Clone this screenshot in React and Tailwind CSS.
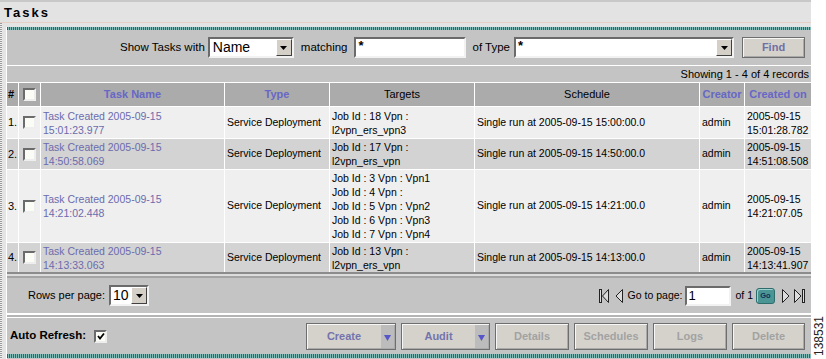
import React from "react";

const teal =
  "bg-[repeating-linear-gradient(90deg,#1a706d_0px,#1a706d_1px,#82bdb9_1px,#82bdb9_2px)]";

function Arrow() {
  return (
    <div className="w-[16px] h-full bg-[#d4d0c8] border border-t-white border-l-white border-b-[#404040] border-r-[#404040] flex items-center justify-center">
      <svg width="7" height="4" viewBox="0 0 7 4">
        <polygon points="0,0 7,0 3.5,4" fill="#000" />
      </svg>
    </div>
  );
}

function Sunken({ className, children }) {
  return (
    <div
      className={
        "flex bg-white border-2 border-t-[#6b6b6b] border-l-[#6b6b6b] border-b-[#f2f2f2] border-r-[#f2f2f2] " +
        className
      }
    >
      {children}
    </div>
  );
}

function Check({ checked }) {
  return (
    <div className="w-[13px] h-[13px] bg-[#fcfcf6] border-2 border-t-[#6b6b6b] border-l-[#6b6b6b] border-b-[#eeeeee] border-r-[#eeeeee] flex items-center justify-center">
      {checked && (
        <svg width="8" height="8" viewBox="0 0 8 8">
          <path d="M1 4 L3 6.5 L7 1.5" stroke="#000" strokeWidth="1.8" fill="none" />
        </svg>
      )}
    </div>
  );
}

function Btn({ label, w, active, dropdown }) {
  return (
    <div
      className={
        "h-[27px] flex bg-[#d5d2cc] border border-[#6e6e6e] shadow-[inset_1px_1px_0_#f6f6f6,inset_-1px_-1px_0_#a9a9a9] " +
        w
      }
    >
      <div
        className={
          "flex-1 flex items-center justify-center text-[11px] font-bold " +
          (active ? "text-[#7474ac]" : "text-[#a2a2a2]")
        }
      >
        {label}
      </div>
      {dropdown && (
        <div className="w-[13px] bg-[#bcbcbc] flex items-end justify-center pb-[7px] mr-[1px] my-[1px]">
          <svg width="7" height="6" viewBox="0 0 7 6">
            <polygon points="0,0 7,0 3.5,6" fill="#5656c8" />
          </svg>
        </div>
      )}
    </div>
  );
}

const cols =
  "grid grid-cols-[11px_21px_183px_104px_144px_224px_44px_66px] gap-x-px";

const rows = [
  {
    n: "1.",
    name: ["Task Created 2005-09-15", "15:01:23.977"],
    targets: ["Job Id : 18 Vpn :", "l2vpn_ers_vpn3"],
    sched: "Single run at 2005-09-15 15:00:00.0",
    created: ["2005-09-15", "15:01:28.782"],
    h: "h-[31px]",
    bg: "bg-[#efefef]",
  },
  {
    n: "2.",
    name: ["Task Created 2005-09-15", "14:50:58.069"],
    targets: ["Job Id : 17 Vpn :", "l2vpn_ers_vpn"],
    sched: "Single run at 2005-09-15 14:50:00.0",
    created: ["2005-09-15", "14:51:08.508"],
    h: "h-[30px]",
    bg: "bg-[#d3d3d3]",
  },
  {
    n: "3.",
    name: ["Task Created 2005-09-15", "14:21:02.448"],
    targets: [
      "Job Id : 3 Vpn : Vpn1",
      "Job Id : 4 Vpn :",
      "Job Id : 5 Vpn : Vpn2",
      "Job Id : 6 Vpn : Vpn3",
      "Job Id : 7 Vpn : Vpn4",
    ],
    sched: "Single run at 2005-09-15 14:21:00.0",
    created: ["2005-09-15", "14:21:07.05"],
    h: "h-[72px]",
    bg: "bg-[#efefef]",
  },
  {
    n: "4.",
    name: ["Task Created 2005-09-15", "14:13:33.063"],
    targets: ["Job Id : 13 Vpn :", "l2vpn_ers_vpn"],
    sched: "Single run at 2005-09-15 14:13:00.0",
    created: ["2005-09-15", "14:13:41.907"],
    h: "h-[29px]",
    bg: "bg-[#d3d3d3]",
  },
];

function Lines({ lines }) {
  return (
    <div className="flex flex-col leading-[14px]">
      {lines.map((l, i) => (
        <span key={i} className="whitespace-nowrap">
          {l}
        </span>
      ))}
    </div>
  );
}

export default function App() {
  return (
    <div className="w-[826px] h-[359px] bg-white overflow-hidden flex font-['Liberation_Sans',Arial,sans-serif] text-black">
      <div className="w-[811px] flex flex-col">
        {/* Title bar */}
        <div className="h-[23px] shrink-0 bg-[#e3e3e3] border-t-2 border-t-[#c8c8c8] border-b border-b-[#e8cfc6] pl-[4px] flex items-center">
          <span className="text-[13px] font-bold tracking-[2px] leading-none">Tasks</span>
        </div>
        <div className="flex flex-1 min-h-0">
          {/* left dotted strip */}
          <div className="w-[2px] bg-[repeating-linear-gradient(180deg,#9a9a9a_0px,#9a9a9a_1px,#f0f0f0_1px,#f0f0f0_2px)]" />
          <div className="w-[4px] bg-[#e4e4e4]" />
          <div className="flex-1 flex flex-col bg-[#e4e4e4] pt-[4px]">
            <div className="flex-1 flex flex-col border-l border-l-white bg-[#c4c4c4]">
              <div className={"h-[3px] shrink-0 " + teal} />
              {/* Filter row */}
              <div className="h-[35px] shrink-0 flex items-center justify-end pr-[6px] text-[11.5px]">
                <span className="mr-[3px]">Show Tasks with</span>
                <Sunken className="w-[86px] h-[21px]">
                  <span className="flex-1 text-[14px] leading-[17px] pl-[3px]">Name</span>
                  <Arrow />
                </Sunken>
                <span className="ml-[7px] mr-[7px]">matching</span>
                <Sunken className="w-[112px] h-[21px]">
                  <span className="text-[13px] leading-[13px] pl-[2px] font-bold">*</span>
                </Sunken>
                <span className="ml-[6px] mr-[4px]">of Type</span>
                <Sunken className="w-[220px] h-[21px]">
                  <span className="flex-1 text-[13px] leading-[13px] pl-[2px] font-bold">*</span>
                  <Arrow />
                </Sunken>
                <div className="ml-[8px] w-[63px] h-[21px] bg-[#d5d2cc] border border-[#6e6e6e] shadow-[inset_1px_1px_0_#f6f6f6,inset_-1px_-1px_0_#a9a9a9] flex items-center justify-center text-[11px] font-bold text-[#7070a4]">
                  Find
                </div>
              </div>
              <div className="h-px bg-white shrink-0" />
              {/* Showing row */}
              <div className="h-[16px] shrink-0 flex items-center justify-end pr-[2px] text-[11px] leading-none">
                Showing 1 - 4 of 4 records
              </div>
              <div className="h-px bg-white shrink-0" />
              {/* Table */}
              <div className="flex flex-col gap-y-px bg-white shrink-0">
                <div className={cols + " h-[23px] bg-white text-[11px]"}>
                  <div className="bg-[#ababab] flex items-center pl-[1px] font-bold">#</div>
                  <div className="bg-[#ababab] flex items-center justify-center">
                    <Check />
                  </div>
                  <div className="bg-[#ababab] flex items-center justify-center font-bold text-[#6767c6]">Task Name</div>
                  <div className="bg-[#ababab] flex items-center justify-center font-bold text-[#6767c6]">Type</div>
                  <div className="bg-[#ababab] flex items-center justify-center">Targets</div>
                  <div className="bg-[#ababab] flex items-center justify-center">Schedule</div>
                  <div className="bg-[#ababab] flex items-center justify-center font-bold text-[#6767c6] whitespace-nowrap">Creator</div>
                  <div className="bg-[#ababab] flex items-center justify-center font-bold text-[#6767c6] whitespace-nowrap">Created on</div>
                </div>
                {rows.map((r) => (
                  <div key={r.n} className={cols + " bg-white text-[10.5px] " + r.h}>
                    <div className={r.bg + " flex items-center pl-[1px] text-[11px]"}>{r.n}</div>
                    <div className={r.bg + " flex items-center justify-center"}>
                      <Check />
                    </div>
                    <div className={r.bg + " flex items-center pl-[2px] text-[#6b6bae]"}>
                      <Lines lines={r.name} />
                    </div>
                    <div className={r.bg + " flex items-center pl-[2px] whitespace-nowrap"}>Service Deployment</div>
                    <div className={r.bg + " flex items-center pl-[2px]"}>
                      <Lines lines={r.targets} />
                    </div>
                    <div className={r.bg + " flex items-center pl-[2px] whitespace-nowrap"}>{r.sched}</div>
                    <div className={r.bg + " flex items-center pl-[2px]"}>admin</div>
                    <div className={r.bg + " flex items-center pl-[2px]"}>
                      <Lines lines={r.created} />
                    </div>
                  </div>
                ))}
              </div>
              {/* separator */}
              <div className="h-[2px] bg-[#8c8c8c] shrink-0" />
              <div className="h-[2px] bg-[#dcdcdc] shrink-0" />
              <div className="h-[2px] bg-[#a4a4a4] shrink-0" />
              {/* Pagination */}
              <div className="h-[35px] shrink-0 flex items-center pl-[21px] pr-[5px] text-[11px]">
                <span className="mr-[4px]">Rows per page:</span>
                <Sunken className="w-[40px] h-[21px]">
                  <span className="flex-1 text-[14px] leading-[17px] pl-[2px]">10</span>
                  <Arrow />
                </Sunken>
                <div className="flex-1" />
                <svg width="10" height="16" viewBox="0 0 10 16" className="mr-[6px]">
                  <rect x="0.5" y="1.5" width="2" height="13" fill="#dcdcdc" stroke="#222" />
                  <polygon points="9.5,1.5 3.5,8 9.5,14.5" fill="#dcdcdc" stroke="#222" />
                </svg>
                <svg width="8" height="16" viewBox="0 0 8 16" className="mr-[5px]">
                  <polygon points="7.5,1.5 1,8 7.5,14.5" fill="#dcdcdc" stroke="#222" />
                </svg>
                <span className="text-[10.5px] mr-[3px]">Go to page:</span>
                <Sunken className="w-[46px] h-[20px]">
                  <span className="text-[13px] leading-[16px] pl-[1px]">1</span>
                </Sunken>
                <span className="text-[10.5px] ml-[4px] mr-[3px]">of 1</span>
                <div className="w-[19px] h-[16px] rounded-[3px] bg-[#4c9595] border border-[#2f6d6d] shadow-[inset_1px_1px_0_#9fd0cf] flex items-center justify-center text-[7.5px] font-bold text-[#10305a] leading-none">
                  Go
                </div>
                <svg width="8" height="16" viewBox="0 0 8 16" className="ml-[7px] mr-[4px]">
                  <polygon points="0.5,1.5 7,8 0.5,14.5" fill="#dcdcdc" stroke="#222" />
                </svg>
                <svg width="12" height="16" viewBox="0 0 12 16">
                  <polygon points="0.5,1.5 7,8 0.5,14.5" fill="#dcdcdc" stroke="#222" />
                  <rect x="8.5" y="1.5" width="2" height="13" fill="#dcdcdc" stroke="#222" />
                </svg>
              </div>
              <div className="h-[2px] bg-white shrink-0" />
              <div className="h-[2px] bg-[#b4b4b4] shrink-0" />
              <div className="h-px bg-white shrink-0" />
              {/* Toolbar */}
              <div className="h-[36px] shrink-0 flex items-center pl-[3px] pr-[6px]">
                <span className="text-[11.5px] font-bold mr-[8px]">Auto Refresh:</span>
                <Check checked />
                <div className="flex-1" />
                <div className="flex gap-[5px]">
                  <Btn label="Create" w="w-[90px]" active dropdown />
                  <Btn label="Audit" w="w-[89px]" active dropdown />
                  <Btn label="Details" w="w-[74px]" />
                  <Btn label="Schedules" w="w-[74px]" />
                  <Btn label="Logs" w="w-[74px]" />
                  <Btn label="Delete" w="w-[73px]" />
                </div>
              </div>
              <div className={"h-[4px] shrink-0 " + teal} />
            </div>
          </div>
        </div>
      </div>
      <div className="flex-1 flex flex-col items-center justify-end pb-[3px]">
        <span className="[writing-mode:vertical-rl] rotate-180 text-[12px] leading-none text-[#222]">
          138531
        </span>
      </div>
    </div>
  );
}
